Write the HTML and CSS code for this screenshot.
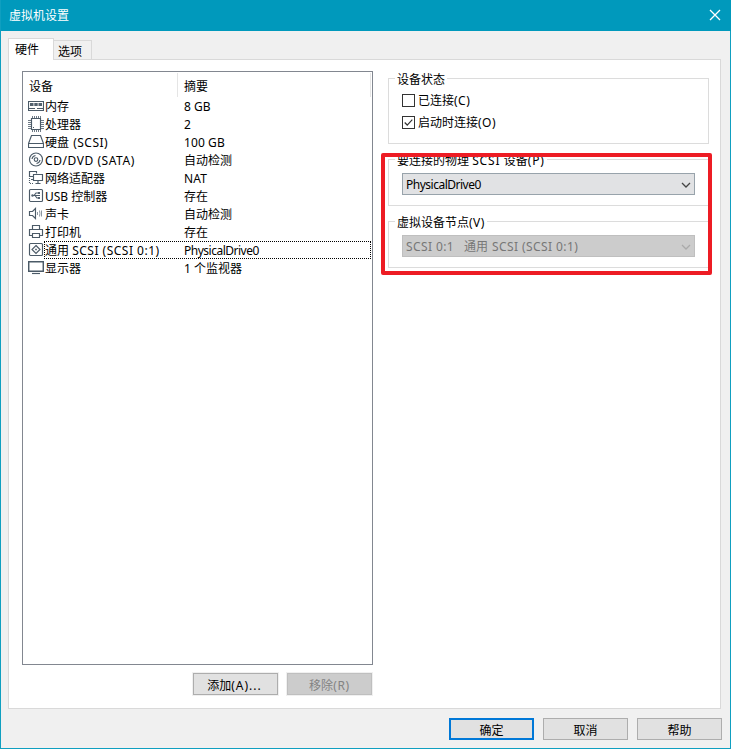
FILE: index.html
```html
<!DOCTYPE html>
<html lang="zh-CN">
<head>
<meta charset="utf-8">
<title>虚拟机设置</title>
<link rel="stylesheet" href="styles.css">
</head>
<body>
<div class="window">
  <header class="titlebar"><span>虚拟机设置</span>
    <svg class="close" width="12" height="12" viewBox="0 0 12 12"><path d="M1 1l10 10M11 1L1 11"/></svg>
  </header>
  <nav class="tabs"><div class="tab active">硬件</div><div class="tab">选项</div></nav>
  <main class="panel">
    <section class="left">
      <div class="list">
        <div class="head"><span class="name">设备</span><span class="sum">摘要</span></div>
        <div class="row"><svg viewBox="0 0 16 16"><path d="M.5 3.500h15v9H.5zM1 10.500h6m2 0h6"/><path class="fill" d="M2 5h3.500v3H2zM6.300 5h3.400v3H6.300zM10.500 5H14v3h-3.500z"/></svg><span class="name">内存</span><span class="sum">8 GB</span></div>
        <div class="row"><svg viewBox="0 0 16 16"><path d="M3.500 2.500h9v11h-9z"/><path class="pins" d="M4.500 0v2m2-2v2m2-2v2m2-2v2m2-2v2M4.500 14v2m2-2v2m2-2v2m2-2v2m2-2v2M0 4.500h3m-3 2h3m-3 2h3m-3 2h3m-3 2h3M13 4.500h3m-3 2h3m-3 2h3m-3 2h3m-3 2h3"/><path d="M5 11.500h1"/></svg><span class="name">处理器</span><span class="sum">2</span></div>
        <div class="row"><svg viewBox="0 0 16 16"><path d="M3.500 1.500h9l3 8v4H.5v-4zM.5 9.500h15"/></svg><span class="name">硬盘 <i class="b pad">(SCSI)</i></span><span class="sum c">100 GB</span></div>
        <div class="row"><svg viewBox="0 0 16 16"><circle cx="8" cy="7.500" r="6.500"/><circle cx="8" cy="7.500" r="1.800"/><path d="M4 7Q4.500 4 7.500 3.500M8.500 11.500Q11.500 11 12 8"/></svg><span class="name disc">CD/DVD (SATA)</span><span class="sum">自动检测</span></div>
        <div class="row"><svg viewBox="0 0 16 16"><path d="M5.500 6.500h-4v-5h7v2M3 9.500h3M5.500 4.500h9v6h-9zM10 10.500v3M7.500 13.500h5"/><path class="dash" d="M1.500 8v5.500H6"/></svg><span class="name">网络适配器</span><span class="sum c">NAT</span></div>
        <div class="row"><svg viewBox="0 0 16 16"><rect x="1.500" y="1.500" width="13" height="12" rx="1"/><path d="M4 7.500h8M6 7.500l2-2.500h2M7 7.500l2 2.500h2"/><circle class="fill" cx="4.500" cy="7.500" r="1.200"/><path class="fill" d="M10 4h2v2h-2zM10 9h2v2h-2z"/></svg><span class="name"><i class="usb">USB</i> 控制器</span><span class="sum">存在</span></div>
        <div class="row"><svg viewBox="0 0 16 16"><path d="M1.500 5.500h3l3-3v10l-3-3h-3z"/><path class="soft" d="M9.500 6v3M11.500 4.500Q12.300 7.500 11.500 10.500M13.500 4.500v6"/></svg><span class="name">声卡</span><span class="sum">自动检测</span></div>
        <div class="row"><svg viewBox="0 0 16 16"><path d="M4.500 5V1.500h7V5M4 11.500H1.500v-6h13v6H12M4.500 9.500h7v4h-7z"/></svg><span class="name">打印机</span><span class="sum">存在</span></div>
        <div class="row selected"><svg viewBox="0 0 16 16"><rect x="1.500" y="1.500" width="13" height="12" rx="1"/><path d="M8 3.500L12 7.500 8 11.500 4 7.500z"/><path class="pins" d="M7.500 7h1v1h-1z"/></svg><span class="name">通用 <i class="b">SCSI (SCSI 0:1)</i></span><span class="sum tight">PhysicalDrive0</span></div>
        <div class="row"><svg viewBox="0 0 16 16"><path d="M.7 1.700h14.600v9.600H.7z" class="bold"/><path d="M4 13.500h8"/></svg><span class="name">显示器</span><span class="sum">1 个监视器</span></div>
      </div>
      <div class="actions"><button class="halo add">添加<i>(A)...</i></button><button class="halo disabled" disabled>移除<i>(R)</i></button></div>
    </section>
    <section class="right">
      <div class="group status"><div class="legend">设备状态</div>
        <div class="check"><span class="box"></span><span>已连接<i class="b">(C)</i></span></div>
        <div class="check"><span class="box"><svg viewBox="0 0 13 13"><path d="M2 6.500l3 3L11 3"/></svg></span><span>启动时连接<i class="b">(O)</i></span></div>
      </div>
      <div class="group phys"><div class="legend">要连接的物理 <i class="b">SCSI</i> 设备<i class="b">(P)</i></div>
        <div class="select"><span class="tight">PhysicalDrive0</span><svg viewBox="0 0 10 6"><path d="M1 1l4 4 4-4"/></svg></div>
      </div>
      <div class="group node"><div class="legend">虚拟设备节点<i class="b">(V)</i></div>
        <div class="select off"><span><i class="b">SCSI 0:1</i><i class="gap">通用</i><i class="b">SCSI (SCSI 0:1)</i></span><svg viewBox="0 0 10 6"><path d="M1 1l4 4 4-4"/></svg></div>
      </div>
      <div class="highlight"></div>
    </section>
  </main>
  <footer><button class="primary">确定</button><button>取消</button><button>帮助</button></footer>
</div>
</body>
</html>
```
FILE: styles.css
```css
* { box-sizing: border-box; }
body { margin: 0; font: 12px/18px "Noto Sans", "Noto Sans CJK SC", sans-serif; color: #000; }
i { font-style: normal; }
.window { width: 731px; height: 749px; background: #f0f0f0; border: 1px solid #0f9fc0; border-top: 0; display: flex; flex-direction: column; }
.titlebar { height: 31px; flex: none; background: #0099bc; color: #fff; display: flex; align-items: center; justify-content: space-between; padding: 0 10px 0 8px; margin: 0 -1px; border-left: 1px solid #0f9fc0; }
.close { fill: none; stroke: #fff; stroke-width: 1.3; margin-top: -1px; }
.tabs { display: flex; align-items: flex-end; height: 29px; flex: none; padding-left: 7px; }
.tab { height: 20px; width: 38px; border: 1px solid #d9d9d9; border-left: 0; padding-left: 4px; line-height: 22px; }
.tab.active { width: 46px; height: 22px; background: #fff; border-left: 1px solid #d9d9d9; border-bottom: 0; padding-left: 6px; line-height: 21px; position: relative; z-index: 1; }
.panel { margin: -1px 9px 0 7px; height: 650px; flex: none; background: #fff; border: 1px solid #d9d9d9; display: flex; padding: 11px 0 0 13px; }
.left { width: 351px; }
.list { height: 594px; border: 1px solid #828790; padding-top: 1px; }
.head { display: flex; height: 24px; width: 348px; border-right: 1px solid #e5e5e5; line-height: 28px; }
.head .name { width: 155px; border-right: 1px solid #e5e5e5; padding-left: 6px; }
.head .sum { padding-left: 6px; }
.row { display: flex; height: 18px; line-height: 20px; white-space: nowrap; padding-left: 5px; width: 348px; }
.row svg { width: 16px; height: 16px; margin-top: 1px; fill: none; stroke: #4b5a67; stroke-width: 1.15; flex: none; }
.row svg .fill { fill: #53616e; stroke: none; }
.row svg .pins { stroke: #6f7b86; stroke-width: 1; }
.row svg .soft { stroke: #8c97a1; stroke-width: 1; }
.row svg .bold { stroke-width: 1.5; }
.row svg .dash { stroke-dasharray: 1 1; }
.row .name { width: 140px; padding-left: 1px; }
.row .disc { letter-spacing: .55px; }
.row .pad { padding-left: 1px; }
.selected { position: relative; }
.selected::after { content: ""; position: absolute; inset: 0 0 0 21px; border: 1px dotted #000; }
.b { letter-spacing: .5px; }
.c { letter-spacing: .1px; }
.tight { letter-spacing: -.5px; }
.actions { display: flex; gap: 9px; justify-content: flex-end; padding: 8px 1px 0 0; }
button { width: 85px; height: 22px; border: 1px solid #adadad; border-radius: 0; background: #e1e1e1; font: inherit; line-height: 20px; color: #000; padding: 2px 0 0; }
.halo { outline: 1px solid #f0f0f0; }
.halo i { letter-spacing: .7px; }
.add i { letter-spacing: 1px; }
.add { padding-right: 2px; }
.disabled { background: #ccc; border-color: #bfbfbf; color: #838383; }
.right { width: 321px; margin: 7px 0 0 15px; position: relative; }
.group { border: 1px solid #dcdcdc; padding: 1px 0 0 13px; }
.legend { height: 18px; line-height: 20px; margin: -10px 0 0 -7px; width: max-content; background: #fff; padding: 0 2px; }
.phys .b { letter-spacing: .9px; }
.status { height: 66px; }
.status .legend { margin-bottom: 1px; }
.check { height: 22px; display: flex; align-items: center; gap: 3px; }
.check > span:last-child { padding-top: 2px; }
.box { width: 13px; height: 13px; border: 1px solid #333; display: flex; }
.box svg { width: 11px; height: 11px; fill: none; stroke: #333; stroke-width: 1.4; }
.phys { margin-top: 15px; height: 47px; }
.node { margin-top: 15px; height: 47px; }
.select { width: 293px; height: 22px; margin-top: 4px; border: 1px solid #98a3ab; background: #e1e2e4; display: flex; align-items: center; justify-content: space-between; padding: 1px 3px 0; }
.select svg { width: 10px; height: 6px; fill: none; stroke: #444; stroke-width: 1.3; }
.off { background: #ccc; border-color: #bfbfbf; color: #777; }
.off .b { letter-spacing: .4px; }
.off svg { stroke: #aaa; }
.gap { margin: 0 4px 0 10px; }
.highlight { position: absolute; left: -7px; top: 75px; width: 331px; height: 122px; border: 4px solid #ed1c24; border-radius: 2px; }
footer { display: flex; gap: 9px; justify-content: flex-end; padding: 9px 8px 0 0; }
.primary { border: 2px solid #0078d7; line-height: 18px; }
```
